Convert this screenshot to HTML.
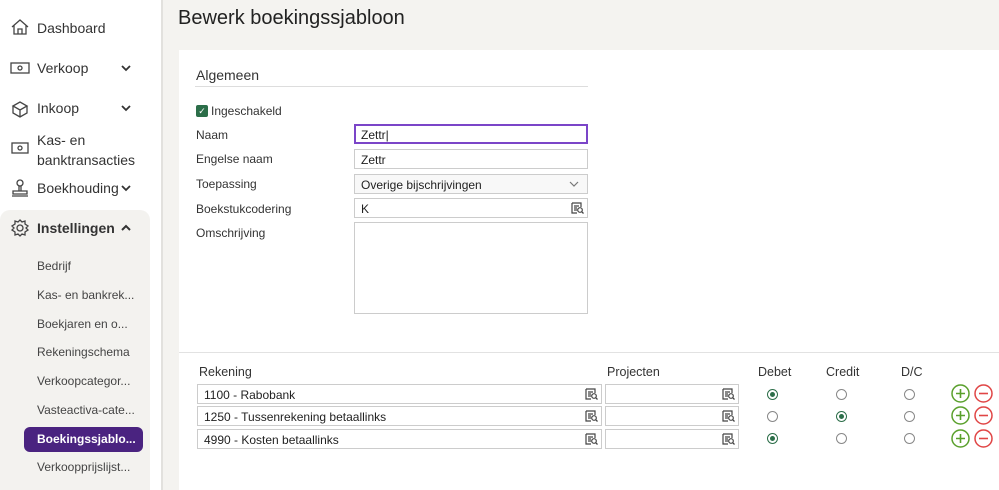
<!DOCTYPE html><html><head><style>
*{box-sizing:border-box;margin:0;padding:0}
body{width:999px;height:490px;overflow:hidden;font-family:"Liberation Sans",sans-serif;color:#333;background:#f4f3f0;position:relative;font-size:12px}
.a{position:absolute}
.side{left:0;top:0;width:163px;height:490px;background:#fff;border-right:2px solid #e2e1de}
.nav{left:37px;font-size:14px;color:#333}
.ic{left:10px;width:20px;height:20px}
.chev{left:120px;width:12px;height:8px}
.sub{left:37px;font-size:12px;color:#444}
.inp{border:1px solid #ccc;background:#fff;height:20px;font-size:12px;padding:3px 6px;color:#222}
.lbl{left:196px;font-size:12px}
.rad{width:11px;height:11px;border:1px solid #888;border-radius:50%;background:#fff}
.rad.on{border-color:#2c6e49}
.rad.on::after{content:"";position:absolute;left:2px;top:2px;width:5px;height:5px;border-radius:50%;background:#2c6e49}
.pm{width:19px;height:19px}
.lk{width:13px;height:12px}
</style></head><body>
<div class="a side"></div>
<div class="a" style="left:0;top:210px;width:150px;height:280px;background:#f3f2ef;border-radius:10px 10px 0 0"></div>
<svg class="a ic" style="top:17px" viewBox="0 0 20 20" fill="none" stroke="#444" stroke-width="1.3"><path d="M2 10L10 3l8 7M4 8v9h12V8M8 17v-5h4v5"/></svg>
<div class="a nav" style="top:20px">Dashboard</div>
<svg class="a ic" style="top:58px" viewBox="0 0 20 20" fill="none" stroke="#444" stroke-width="1.3"><rect x="1" y="5" width="18" height="10"/><circle cx="10" cy="10" r="2"/></svg>
<div class="a nav" style="top:60px">Verkoop</div>
<svg class="a chev" style="top:64px" viewBox="0 0 12 8" fill="none" stroke="#333" stroke-width="1.8"><path d="M2 2l4 4 4-4"/></svg>
<svg class="a ic" style="top:98px" viewBox="0 0 20 20" fill="none" stroke="#444" stroke-width="1.3"><path d="M3 8l7-4 7 4-7 4zM3 8v7l7 4 7-4V8M10 12v7"/></svg>
<div class="a nav" style="top:100px">Inkoop</div>
<svg class="a chev" style="top:104px" viewBox="0 0 12 8" fill="none" stroke="#333" stroke-width="1.8"><path d="M2 2l4 4 4-4"/></svg>
<svg class="a ic" style="top:138px" viewBox="0 0 20 20" fill="none" stroke="#444" stroke-width="1.3"><rect x="2" y="5" width="16" height="10"/><circle cx="10" cy="10" r="2"/></svg>
<div class="a nav" style="top:130px;line-height:20px">Kas- en<br>banktransacties</div>
<svg class="a ic" style="top:178px" viewBox="0 0 20 20" fill="none" stroke="#444" stroke-width="1.3"><circle cx="10" cy="5" r="3"/><path d="M9 8v5h2V8M3 13h14v3H3zM2 18h16"/></svg>
<div class="a nav" style="top:180px">Boekhouding</div>
<svg class="a chev" style="top:184px" viewBox="0 0 12 8" fill="none" stroke="#333" stroke-width="1.8"><path d="M2 2l4 4 4-4"/></svg>
<svg class="a ic" style="top:218px" viewBox="0 0 20 20" fill="none" stroke="#444" stroke-width="1.3"><circle cx="10" cy="10" r="3"/><path d="M10 2l2 2 3-1 0 3 3 2-2 2 2 2-3 2 0 3-3-1-2 2-2-2-3 1 0-3-3-2 2-2-2-2 3-2 0-3 3 1z"/></svg>
<div class="a nav" style="top:220px;font-weight:bold">Instellingen</div>
<svg class="a chev" style="top:224px" viewBox="0 0 12 8" fill="none" stroke="#333" stroke-width="2"><path d="M2 6l4-4 4 4"/></svg>
<div class="a sub" style="top:259px">Bedrijf</div>
<div class="a sub" style="top:288px">Kas- en bankrek...</div>
<div class="a sub" style="top:317px">Boekjaren en o...</div>
<div class="a sub" style="top:345px">Rekeningschema</div>
<div class="a sub" style="top:374px">Verkoopcategor...</div>
<div class="a sub" style="top:403px">Vasteactiva-cate...</div>
<div class="a" style="left:24px;top:427px;width:119px;height:25px;background:#4a2380;border-radius:6px"></div>
<div class="a sub" style="top:432px;color:#fff;font-weight:bold">Boekingssjablo...</div>
<div class="a sub" style="top:460px">Verkoopprijslijst...</div>

<div class="a" style="left:178px;top:7px;font-size:20px;color:#222">Bewerk boekingssjabloon</div>
<div class="a" style="left:179px;top:50px;width:820px;height:440px;background:#fff"></div>
<div class="a" style="left:196px;top:67px;font-size:14px">Algemeen</div>
<div class="a" style="left:195px;top:86px;width:393px;height:1px;background:#ddd"></div>
<div class="a" style="left:196px;top:105px;width:12px;height:12px;background:#2c6e49;border-radius:2px;color:#fff;font-size:9px;line-height:12px;text-align:center">&#10003;</div>
<div class="a lbl" style="left:211px;top:104px">Ingeschakeld</div>
<div class="a lbl" style="top:128px">Naam</div>
<div class="a inp" style="left:354px;top:124px;width:234px;height:20px;border:2px solid #7b45c8;padding:2px 5px">Zettr|</div>
<div class="a lbl" style="top:152px">Engelse naam</div>
<div class="a inp" style="left:354px;top:149px;width:234px">Zettr</div>
<div class="a lbl" style="top:177px">Toepassing</div>
<div class="a inp" style="left:354px;top:174px;width:234px;background:#f8f8f8">Overige bijschrijvingen<svg style="position:absolute;right:8px;top:6px" width="10" height="7" viewBox="0 0 10 7" fill="none" stroke="#777" stroke-width="1.2"><path d="M1 1l4 4 4-4"/></svg></div>
<div class="a lbl" style="top:202px">Boekstukcodering</div>
<div class="a inp" style="left:354px;top:198px;width:234px">K</div>
<div class="a lbl" style="top:226px">Omschrijving</div>
<div class="a inp" style="left:354px;top:222px;width:234px;height:92px"></div>
<div class="a" style="left:179px;top:352px;width:820px;height:1px;background:#e2e2e2"></div>
<div class="a" style="left:199px;top:365px;font-size:12.5px">Rekening</div>
<div class="a" style="left:607px;top:365px;font-size:12.5px">Projecten</div>
<div class="a" style="left:758px;top:365px;font-size:12.5px">Debet</div>
<div class="a" style="left:826px;top:365px;font-size:12.5px">Credit</div>
<div class="a" style="left:901px;top:365px;font-size:12.5px">D/C</div>

<div class="a inp" style="left:197px;top:384px;width:405px">1100 - Rabobank</div>
<div class="a inp" style="left:197px;top:406px;width:405px">1250 - Tussenrekening betaallinks</div>
<div class="a inp" style="left:197px;top:429px;width:405px">4990 - Kosten betaallinks</div>
<div class="a inp" style="left:605px;top:384px;width:134px"></div>
<div class="a inp" style="left:605px;top:406px;width:134px"></div>
<div class="a inp" style="left:605px;top:429px;width:134px"></div>

<div class="a rad on" style="left:767px;top:389px"></div><div class="a rad" style="left:836px;top:389px"></div><div class="a rad" style="left:904px;top:389px"></div>
<div class="a rad" style="left:767px;top:411px"></div><div class="a rad on" style="left:836px;top:411px"></div><div class="a rad" style="left:904px;top:411px"></div>
<div class="a rad on" style="left:767px;top:433px"></div><div class="a rad" style="left:836px;top:433px"></div><div class="a rad" style="left:904px;top:433px"></div>

<svg width="0" height="0" style="position:absolute"><symbol id="pl" viewBox="0 0 19 19"><circle cx="9.5" cy="9.5" r="8.5" fill="none" stroke="#5aa02c" stroke-width="1.5"/><path d="M9.5 5v9M5 9.5h9" stroke="#5aa02c" stroke-width="1.6"/></symbol><symbol id="mi" viewBox="0 0 19 19"><circle cx="9.5" cy="9.5" r="8.5" fill="none" stroke="#e04545" stroke-width="1.5"/><path d="M5 9.5h9" stroke="#e04545" stroke-width="1.6"/></symbol>
<symbol id="lk" viewBox="0 0 13 12"><path d="M1 1h9v4M1 1v10h5M3 4h5M3 6h3M3 8h3" fill="none" stroke="#444" stroke-width="1.2"/><circle cx="9" cy="8" r="2.3" fill="none" stroke="#444" stroke-width="1.2"/><path d="M10.6 9.6L12.5 11.5" stroke="#444" stroke-width="1.3"/></symbol></svg>
<svg class="a pm" style="left:951px;top:384px"><use href="#pl"/></svg><svg class="a pm" style="left:974px;top:384px"><use href="#mi"/></svg>
<svg class="a pm" style="left:951px;top:406px"><use href="#pl"/></svg><svg class="a pm" style="left:974px;top:406px"><use href="#mi"/></svg>
<svg class="a pm" style="left:951px;top:429px"><use href="#pl"/></svg><svg class="a pm" style="left:974px;top:429px"><use href="#mi"/></svg>
<svg class="a lk" style="left:571px;top:202px"><use href="#lk"/></svg>
<svg class="a lk" style="left:585px;top:388px"><use href="#lk"/></svg>
<svg class="a lk" style="left:585px;top:410px"><use href="#lk"/></svg>
<svg class="a lk" style="left:585px;top:433px"><use href="#lk"/></svg>
<svg class="a lk" style="left:722px;top:388px"><use href="#lk"/></svg>
<svg class="a lk" style="left:722px;top:410px"><use href="#lk"/></svg>
<svg class="a lk" style="left:722px;top:433px"><use href="#lk"/></svg>
</body></html>
